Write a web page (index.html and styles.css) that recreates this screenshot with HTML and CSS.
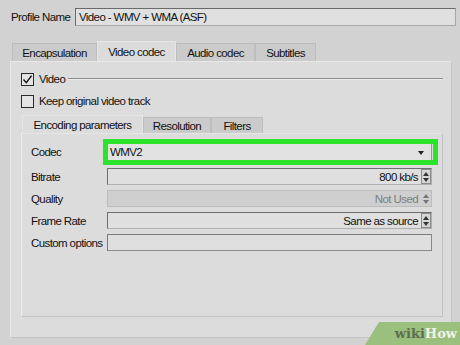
FILE: index.html
```html
<!DOCTYPE html>
<html>
<head>
<meta charset="utf-8">
<link rel="stylesheet" href="styles.css">
</head>
<body>
<div class="window">
  <div class="profile">
    <span class="profile-label">Profile Name</span>
    <div class="text-input">Video - WMV + WMA (ASF)</div>
  </div>

  <div class="tabs">
    <div class="tab t1">Encapsulation</div>
    <div class="tab t2 active">Video codec</div>
    <div class="tab t3">Audio codec</div>
    <div class="tab t4">Subtitles</div>
  </div>

  <div class="panel">
    <div class="group-title">
      <span class="checkbox checked">
        <svg width="11" height="11" viewBox="0 0 11 11"><path d="M1.5 5.5 L4.3 8.6 L9.6 1.6" fill="none" stroke="#111" stroke-width="1.4"/></svg>
      </span>
      <span class="group-text">Video</span>
      <span class="group-line"></span>
    </div>
    <div class="check-row">
      <span class="checkbox"></span>
      <span>Keep original video track</span>
    </div>

    <div class="inner-tabs">
      <div class="itab i1 active">Encoding parameters</div>
      <div class="itab i2">Resolution</div>
      <div class="itab i3">Filters</div>
    </div>
    <div class="inner-panel">
      <div class="form">
        <div class="label">Codec</div>
        <div class="field combo">
          <span class="combo-text">WMV2</span>
          <span class="arrow"></span>
          <div class="highlight"></div>
        </div>

        <div class="label">Bitrate</div>
        <div class="field spin"><span class="val">800 kb/s</span><span class="spinbtn"><i class="up"></i><i class="down"></i></span></div>

        <div class="label">Quality</div>
        <div class="field spin disabled"><span class="val">Not Used</span><span class="spinbtn flat"><i class="up"></i><i class="down"></i></span></div>

        <div class="label">Frame Rate</div>
        <div class="field spin"><span class="val">Same as source</span><span class="spinbtn"><i class="up"></i><i class="down"></i></span></div>

        <div class="label">Custom options</div>
        <div class="field plain"></div>
      </div>
    </div>
  </div>

  <div class="watermark"><span class="wiki">wiki</span><span class="how">How</span></div>
</div>
</body>
</html>
```

FILE: styles.css
```css
html, body {
  margin: 0;
  padding: 0;
}
body {
  width: 460px;
  height: 345px;
  overflow: hidden;
  background: #d2d2d2;
  font-family: "Liberation Sans", Arial, sans-serif;
  font-size: 11.5px;
  letter-spacing: -0.6px;
  color: #111;
}
.window {
  position: relative;
  width: 460px;
  height: 345px;
}

/* profile row */
.profile {
  display: flex;
  align-items: center;
  padding: 8px 4px 0 11px;
  height: 18px;
}
.profile-label {
  width: 64px;
  white-space: nowrap;
}
.text-input {
  flex: 1;
  height: 16px;
  line-height: 16px;
  border: 1px solid #6a6a6a;
  border-right-color: #a8a8a8;
  border-bottom-color: #a8a8a8;
  background: #e0e0e0;
  padding-left: 3px;
}

/* main tabs */
.tabs {
  display: flex;
  align-items: flex-end;
  margin: 15px 0 0 12px;
  height: 20px;
}
.tab {
  height: 18px;
  line-height: 18px;
  box-sizing: border-box;
  text-align: center;
  background: #cbcbcb;
  border: 1px solid #bdbdbd;
  border-bottom: none;
}
.tab.active {
  height: 20px;
  line-height: 20px;
  background: #dcdcdc;
  border-color: #e6e6e6;
}
.t1 { width: 85px; }
.t2 { width: 79px; }
.t3 { width: 79px; }
.t4 { width: 61px; }

.panel {
  margin: 0 8px 0 10px;
  height: 277px;
  box-sizing: border-box;
  background: #dcdcdc;
  border: 1px solid #c4c4c4;
  border-top-color: #e8e8e8;
  border-left-color: #e8e8e8;
  padding: 10px 8px 0 10px;
}

.group-title {
  display: flex;
  align-items: center;
  height: 14px;
}
.checkbox {
  width: 11px;
  height: 11px;
  border: 1px solid #2a2a2a;
  background: #e4e4e4;
  display: inline-flex;
  align-items: center;
  justify-content: center;
  flex: 0 0 auto;
}
.checkbox svg { display: block; }
.group-text {
  margin-left: 5px;
}
.group-line {
  flex: 1;
  height: 0;
  border-top: 1px solid #8c8c8c;
  border-bottom: 1px solid #ececec;
  margin-left: 3px;
}
.check-row {
  display: flex;
  align-items: center;
  gap: 5px;
  height: 14px;
  margin-top: 8px;
}

/* inner tabs */
.inner-tabs {
  display: flex;
  align-items: flex-end;
  margin: 7px 0 0 1px;
  height: 18px;
}
.itab {
  height: 16px;
  line-height: 16px;
  box-sizing: border-box;
  text-align: center;
  background: #cbcbcb;
  border: 1px solid #bdbdbd;
  border-bottom: none;
}
.itab.active {
  height: 18px;
  line-height: 18px;
  background: #dcdcdc;
  border-color: #e6e6e6;
}
.i1 { width: 121px; }
.i2 { width: 68px; }
.i3 { width: 52px; }

.inner-panel {
  height: 184px;
  box-sizing: border-box;
  border: 1px solid #c2c2c2;
  border-top-color: #e6e6e6;
  border-left-color: #ededed;
  background: #dcdcdc;
  padding: 7px 10px 0 9px;
}

.form {
  display: grid;
  grid-template-columns: 76px 325px;
  grid-template-rows: 22px;
  grid-auto-rows: 17px;
  row-gap: 5px;
  align-items: center;
}

.label {
  white-space: nowrap;
}
.field {
  position: relative;
  height: 17px;
  box-sizing: border-box;
  border: 1px solid #6e6e6e;
  border-right-color: #b0b0b0;
  border-bottom-color: #b0b0b0;
  background: #dfdfdf;
  display: flex;
  align-items: center;
}
.field.plain {
  border-color: #7a7a7a;
  border-right-color: #8a8a8a;
  border-bottom-color: #8a8a8a;
}
.combo {
  height: 20px;
  background: #e2e2e2;
  border-color: #9a9a9a;
}
.combo-text {
  padding-left: 2px;
}
.arrow {
  position: absolute;
  right: 7px;
  top: 8px;
  width: 0;
  height: 0;
  border-left: 3px solid transparent;
  border-right: 3px solid transparent;
  border-top: 4px solid #222;
}
.highlight {
  position: absolute;
  left: -5px;
  right: -7px;
  top: -4px;
  bottom: -4px;
  border: 5px solid #2ae32a;
  pointer-events: none;
}

.spin {
  justify-content: flex-end;
}
.spin .val {
  padding-right: 3px;
}
.disabled {
  background: #cfcfcf;
  border-color: #bdbdbd;
  color: #7e7e7e;
}
.spinbtn {
  width: 10px;
  height: 15px;
  box-sizing: border-box;
  border: 1px solid #8a8a8a;
  background: #d6d6d6;
  display: flex;
  flex-direction: column;
  align-items: center;
  justify-content: center;
  gap: 2px;
}
.spinbtn.flat {
  border-color: transparent;
  background: transparent;
}
.spinbtn i {
  display: block;
  width: 0;
  height: 0;
  border-left: 3px solid transparent;
  border-right: 3px solid transparent;
}
.spinbtn .up { border-bottom: 4px solid #333; }
.spinbtn .down { border-top: 4px solid #333; }
.spinbtn.flat .up { border-bottom-color: #777; }
.spinbtn.flat .down { border-top-color: #777; }

/* watermark */
.watermark {
  position: absolute;
  right: 0;
  bottom: 0;
  width: 95px;
  height: 23px;
  background: #9bbf7c;
  clip-path: polygon(14px 0, 100% 0, 100% 100%, 0 100%);
  font-family: "DejaVu Serif", "Liberation Serif", serif;
  font-weight: bold;
  font-size: 13px;
  letter-spacing: 0;
  line-height: 23px;
  text-align: right;
  padding-right: 3px;
  box-sizing: border-box;
}
.wiki { color: #5d6e52; }
.how { color: #eef4e8; }
```
